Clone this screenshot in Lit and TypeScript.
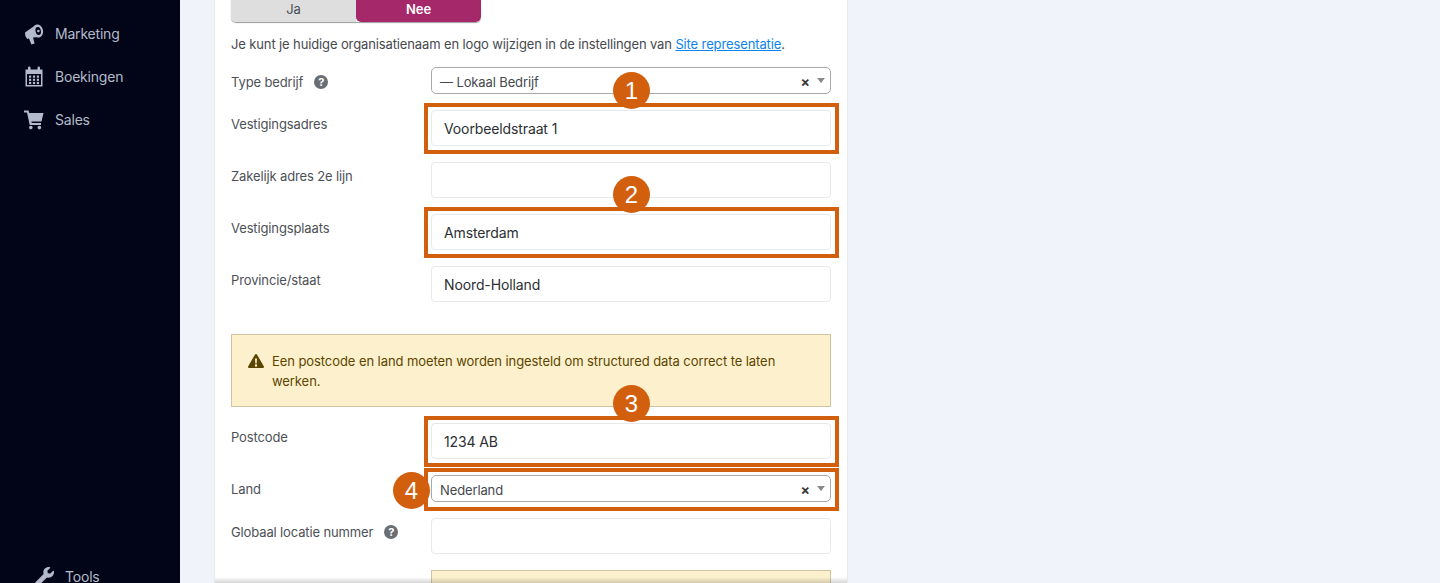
import { LitElement, html, css } from "lit";
import { customElement } from "lit/decorators.js";

const megaphone = html`<svg class="ico" viewBox="0 0 20 22"><path fill="currentColor" d="M1 9.500 11 2.500 16 14 9 14.600 10.600 20.500 7.400 21.400 5 15.400 3.200 16Q.6 13 1 9.500Z"/><ellipse fill="currentColor" cx="14" cy="8" rx="5" ry="6.600" transform="rotate(-12 14 8)"/><ellipse fill="#020517" cx="14.200" cy="8" rx="2.700" ry="4" transform="rotate(-12 14.200 8)"/><circle fill="currentColor" cx="14.400" cy="8" r="1.300"/></svg>`;
const calendar = html`<svg class="ico" viewBox="0 0 20 22"><path fill="currentColor" fill-rule="evenodd" d="M1.500 3.500H4V1.800A1.200 1.200 0 0 1 6.500 1.800V3.500H13.500V1.800A1.200 1.200 0 0 1 16 1.800V3.500H18.500V20.500H1.500ZM3 8V19H17V8Z"/><g fill="currentColor"><rect x="5" y="9.500" width="2.200" height="2.200"/><rect x="8.900" y="9.500" width="2.200" height="2.200"/><rect x="12.800" y="9.500" width="2.200" height="2.200"/><rect x="5" y="12.700" width="2.200" height="2.200"/><rect x="8.900" y="12.700" width="2.200" height="2.200"/><rect x="12.800" y="12.700" width="2.200" height="2.200"/><rect x="5" y="15.900" width="2.200" height="2.200"/><rect x="8.900" y="15.900" width="2.200" height="2.200"/><rect x="12.800" y="15.900" width="2.200" height="2.200"/></g></svg>`;
const cart = html`<svg class="ico" viewBox="0 0 20 20"><path fill="currentColor" d="M0 .5H4.500L5.300 3H19.500L17.500 11.500H7.400L7.800 13H17V15H5.700L3 2.500H0Z"/><circle fill="currentColor" cx="6.800" cy="17.600" r="1.800"/><circle fill="currentColor" cx="15.400" cy="17.600" r="1.800"/></svg>`;
const wrench = html`<svg class="ico" viewBox="0 0 512 512"><path fill="currentColor" d="M507.73 109.1c-2.24-9.03-13.54-12.09-20.12-5.51l-74.36 74.36-67.88-11.31-11.31-67.88 74.36-74.36c6.62-6.62 3.43-17.9-5.66-20.16-47.38-11.74-99.55.91-136.58 37.93-39.64 39.64-50.55 97.1-34.05 147.2L18.74 402.76c-24.99 24.99-24.99 65.51 0 90.5 24.99 24.99 65.51 24.99 90.5 0l213.21-213.21c50.12 16.71 107.47 5.68 147.37-34.22 37.07-37.07 49.7-89.32 37.91-136.73z"/></svg>`;
const warn = html`<svg class="warn-ico" viewBox="0 0 16 14"><path fill="#5c4500" fill-rule="evenodd" d="M8 0Q8.700 0 9.100 .7L15.800 12.300Q16.400 13.700 14.900 14H1.100Q-.4 13.700 .2 12.300L6.900 .7Q7.300 0 8 0ZM7 4.500 7.300 9.500H8.700L9 4.500ZM8 10.300A1.200 1.200 0 1 0 8 12.700 1.200 1.200 0 1 0 8 10.300Z"/></svg>`;

@customElement("app-root")
export class AppRoot extends LitElement {
  static styles = css`
    :host { display: flex; position: relative; height: 583px; overflow: hidden; background: #f0f3f9; font-family: Inter, "Liberation Sans", sans-serif; font-size: 13px; color: #50575e; }
    .side { width: 180px; flex: none; background: #020517; color: #b3bbcb; display: flex; flex-direction: column; padding: 12px 0 0 24px; box-sizing: border-box; font-size: 14px; letter-spacing: -.2px; }
    .nav { display: flex; align-items: center; gap: 11px; height: 43px; flex: none; }
    .ico { width: 20px; height: 22px; flex: none; }
    .nav.tools { margin: auto 0 -4px 11px; height: 22px; gap: 11px; }
    .nav.tools .ico { width: 19px; height: 19px; }
    .card { width: 632px; margin-left: 35px; flex: none; background: #fff; box-shadow: 0 0 0 1px #e6e9ef; box-sizing: border-box; padding: 0 16px; display: flex; flex-direction: column; position: relative; }
    .toggle { width: 250px; height: 22px; flex: none; display: flex; margin-bottom: 12px; border-radius: 0 0 5px 5px; overflow: hidden; box-shadow: 0 1px 1px #9c9c9c; }
    .toggle span { display: flex; align-items: center; justify-content: center; padding-bottom: 5px; box-sizing: border-box; }
    .ja { width: 125px; background: #dedede; color: #4a4f55; }
    .nee { flex: 1; background: #a4286a; color: #fff; font-weight: 600; border-radius: 0 0 5px 5px; }
    .intro { flex: none; margin: 0 0 13px; line-height: 20px; color: #46494e; letter-spacing: -.125px; }
    .intro a { color: #0b84ee; text-decoration: underline; }
    .rows { display: flex; flex: none; flex-direction: column; gap: 16px; }
    .row { display: flex; flex: none; }
    .label { width: 200px; height: 27px; box-sizing: border-box; flex: none; line-height: 28px; display: flex; gap: 11px; align-items: flex-start; color: #4d5157; letter-spacing: -.13px; }
    .row:first-child .label { padding-top: 1px; }
    .help { width: 14px; height: 14px; margin-top: 7px; border-radius: 50%; background: #6a6e74; color: #fff; font-size: 11px; font-weight: 700; line-height: 14px; text-align: center; letter-spacing: 0; }
    .ctl { width: 400px; position: relative; }
    .input { height: 36px; box-sizing: border-box; border: 1px solid #e8e9eb; border-radius: 4px; padding: 0 12px; display: flex; align-items: center; font-size: 14px; color: #2b2f33; background: #fff; letter-spacing: -.12px; }
    .select { height: 27px; box-sizing: border-box; border: 1px solid #a9a9a9; border-radius: 5px; padding: 3px 0 0 8px; display: flex; align-items: center; color: #45494e; background: #fff; letter-spacing: -.12px; }
    .clear { margin-left: auto; font-weight: 700; font-size: 14px; color: #3a3a3a; line-height: 1; }
    .arrow { width: 0; height: 0; margin: -3px 5px 0 7px; border-left: 4.500px solid transparent; border-right: 4.500px solid transparent; border-top: 5px solid #8a8a8a; }
    .warning { display: flex; flex: none; gap: 8px; margin-top: 16px; padding: 16px 16px 15px; border: 1px solid #cfc49f; background: #fdf1cd; color: #5c4500; line-height: 20px; letter-spacing: -.075px; }
    .warn-ico { width: 16px; height: 14px; flex: none; margin-top: 3px; }
    .hl { position: absolute; inset: -7px -8px -8px -7px; border: 4px solid #d15f0e; pointer-events: none; }
    .hl.sel { bottom: -9px; }
    .badge { position: absolute; width: 37px; height: 37px; border-radius: 50%; background: #d15f0e; color: #fff; font-size: 24px; line-height: 37px; text-align: center; left: 182px; top: -38px; font-family: "Liberation Sans", sans-serif; }
    .badge.side-b { left: -38px; top: -3px; }
    .yellow { height: 20px; flex: none; margin-top: 16px; background: #fdf1cd; border: 1px solid #cfc49f; border-bottom: 0; margin-left: 200px; }
    .fade { position: absolute; left: 0; right: 0; top: 577px; height: 6px; background: linear-gradient(rgba(0,0,0,0), rgba(0,0,0,.16)); }
  `;

  private hl(n: string, side = false) {
    return html`<div class=${side ? "hl sel" : "hl"}></div><div class=${side ? "badge side-b" : "badge"}>${n}</div>`;
  }

  render() {
    return html`
      <aside class="side">
        <div class="nav">${megaphone}<span>Marketing</span></div>
        <div class="nav">${calendar}<span>Boekingen</span></div>
        <div class="nav">${cart}<span>Sales</span></div>
        <div class="nav tools">${wrench}<span>Tools</span></div>
      </aside>
      <main class="card">
        <div class="toggle"><span class="ja">Ja</span><span class="nee">Nee</span></div>
        <p class="intro">Je kunt je huidige organisatienaam en logo wijzigen in de instellingen van <a>Site representatie</a>.</p>
        <div class="rows">
          <div class="row">
            <div class="label">Type bedrijf <span class="help">?</span></div>
            <div class="ctl"><div class="select">— Lokaal Bedrijf<span class="clear">×</span><span class="arrow"></span></div></div>
          </div>
          <div class="row">
            <div class="label">Vestigingsadres</div>
            <div class="ctl"><div class="input">Voorbeeldstraat 1</div>${this.hl("1")}</div>
          </div>
          <div class="row">
            <div class="label">Zakelijk adres 2e lijn</div>
            <div class="ctl"><div class="input"></div></div>
          </div>
          <div class="row">
            <div class="label">Vestigingsplaats</div>
            <div class="ctl"><div class="input">Amsterdam</div>${this.hl("2")}</div>
          </div>
          <div class="row">
            <div class="label">Provincie/staat</div>
            <div class="ctl"><div class="input">Noord-Holland</div></div>
          </div>
          <div class="warning">${warn}<span>Een postcode en land moeten worden ingesteld om structured data correct te laten werken.</span></div>
          <div class="row">
            <div class="label">Postcode</div>
            <div class="ctl"><div class="input">1234 AB</div>${this.hl("3")}</div>
          </div>
          <div class="row">
            <div class="label">Land</div>
            <div class="ctl"><div class="select">Nederland<span class="clear">×</span><span class="arrow"></span></div>${this.hl("4", true)}</div>
          </div>
          <div class="row">
            <div class="label">Globaal locatie nummer <span class="help">?</span></div>
            <div class="ctl"><div class="input"></div></div>
          </div>
        </div>
        <div class="yellow"></div>
        <div class="fade"></div>
      </main>
    `;
  }
}
